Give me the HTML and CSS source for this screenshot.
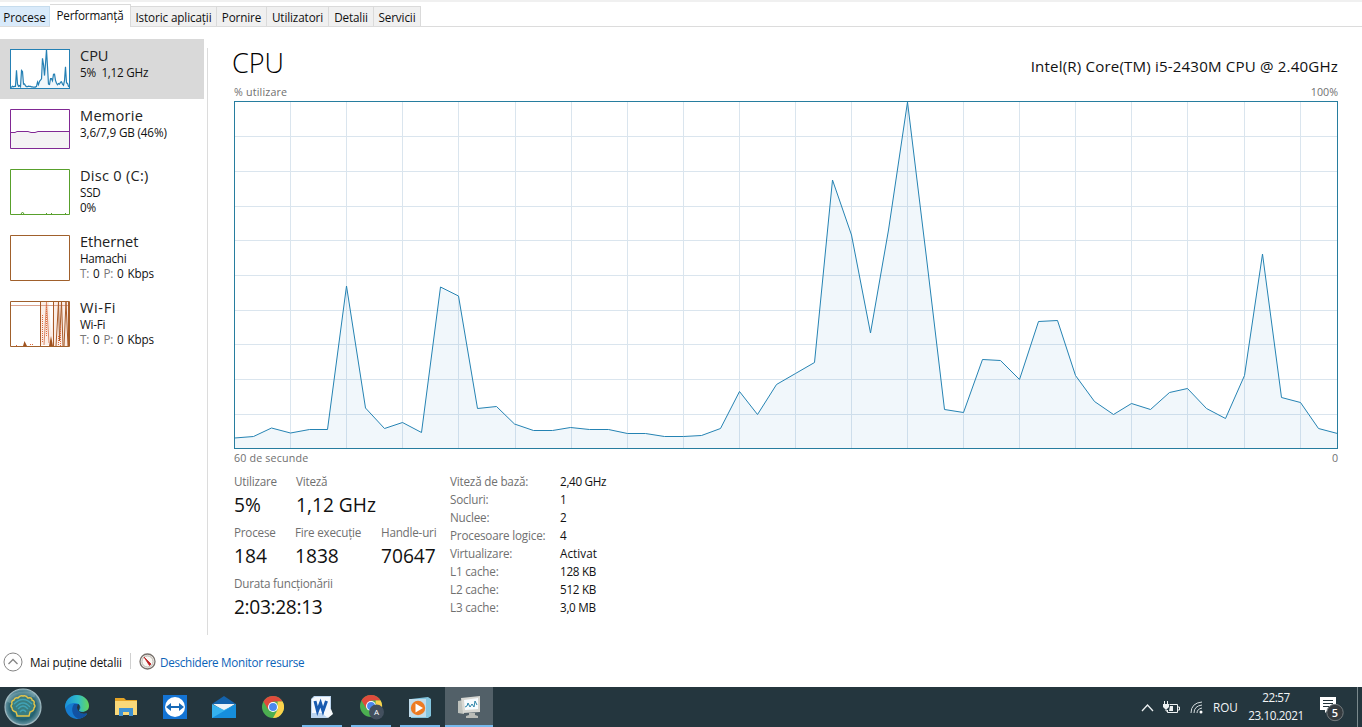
FILE: index.html
```html
<!DOCTYPE html>
<html lang="ro">
<head>
<meta charset="utf-8">
<title>Manager de activități</title>
<link rel="stylesheet" href="styles.css">
</head>
<body>
<nav class="tabs">
<span class="tab tab-first">Procese</span><span class="tab tab-active">Performanță</span><span class="tab tab-history">Istoric aplicații</span><span class="tab tab-startup">Pornire</span><span class="tab tab-users">Utilizatori</span><span class="tab tab-details">Detalii</span><span class="tab tab-services">Servicii</span>
</nav>
<main class="main">
<aside class="sidebar">
<section class="item selected">
<svg class="thumb" width="60" height="40" viewBox="0 0 60 40"><rect x=".5" y=".5" width="59" height="39" fill="#fff"/><svg x=".5" y=".5" width="59" height="39" viewBox="0 0 1103 347" preserveAspectRatio="none"><use href="#cpu-area"/><use href="#cpu-line" stroke="#2580b4" stroke-width="1.2"/></svg><rect x=".5" y=".5" width="59" height="39" fill="none" stroke="#2580b4"/></svg>
<div class="info"><h2>CPU</h2><p>5%&nbsp; 1,12 GHz</p></div>
</section>
<section class="item">
<svg class="thumb" width="60" height="40" viewBox="0 0 60 40"><path d="M0 23.5H5L7 22.5H18L21 23.5H25L28 22.5H60V40H0Z" fill="#f4f2f4"/><path d="M0 23.5H5L7 22.5H18L21 23.5H25L28 22.5H60M.5.5H59.5V39.5H.5Z" fill="none" stroke="#812894"/></svg>
<div class="info"><h2 class="t-memory">Memorie</h2><p class="p-memory">3,6/7,9 GB (46%)</p></div>
</section>
<section class="item tall">
<svg class="thumb" width="60" height="46" viewBox="0 0 60 46"><path d="M.5.5H59.5V45.5H.5ZM11 45L12.5 43L14 45M36.500 44V45M41.500 44V45M55.500 44V45" fill="#fff" stroke="#58a02c"/></svg>
<div class="info"><h2 class="t-disk">Disc 0 (C:)</h2><p>SSD</p><p>0%</p></div>
</section>
<section class="item tall">
<svg class="thumb" width="60" height="46" viewBox="0 0 60 46"><path d="M.5.5H59.5V45.5H.5Z" fill="#fff" stroke="#a0602c"/></svg>
<div class="info"><h2>Ethernet</h2><p>Hamachi</p><p class="rates"><span class="dim">T:</span> 0 <span class="dim">P:</span> 0 Kbps</p></div>
</section>
<section class="item tall">
<svg class="thumb" width="60" height="46" viewBox="0 0 60 46"><path d="M.5.5H59.5V45.5H.5Z" fill="#fff" stroke="#a0602c"/><path d="M30 1H39L42 44H31ZM44 1H59V45H40Z" fill="#fbeee7"/><path d="M1 4.500H59" stroke="#d9a38e"/><path d="M13 45L14.500 40L17 45ZM39 45L41 35L43 45Z" fill="#a0521e"/><path d="M30.500 1V45M43.500 1V45M46 45L48.500 1L49.500 40L51.500 1L53 45M54 45L56 1L58 45M58.500 1V45" fill="none" stroke="#a85a28"/><path d="M34 44L36.500 1L39 42" fill="none" stroke="#dc8c6a"/><path d="M32.500 14V42M36.500 4V35M48.500 35V45M50.500 24V45M20 43.500H23M6 44.500H7" fill="none" stroke="#e0693c" stroke-dasharray="1 1"/></svg>
<div class="info"><h2 class="t-wifi">Wi-Fi</h2><p>Wi-Fi</p><p class="rates"><span class="dim">T:</span> 0 <span class="dim">P:</span> 0 Kbps</p></div>
</section>
</aside>
<div class="rule"></div>
<article class="content">
<header class="heading"><h1>CPU</h1><span class="model">Intel(R) Core(TM) i5-2430M CPU @ 2.40GHz</span></header>
<div class="axis top"><span class="a-use">% utilizare</span><span>100%</span></div>
<svg class="chart" width="1104" height="348" viewBox="0 0 1104 348">
<defs>
<path id="cpu-line" vector-effect="non-scaling-stroke" fill="none" d="M0 337L19 335.500L37 327L56 332L75 328.500L93 328.500L112 185L131 307L150 327.500L168 321.500L187 331.500L206 186L224 195L243 307.500L262 305.500L280 323L299 329.500L318 329.500L336 326.500L355 328.500L374 328.500L393 332.500L411 332.500L430 335.500L449 335.500L467 334.500L486 327.500L505 290.500L523 313.500L542 283.500L561 272.500L580 261.500L598 79L617 134L636 232L654 129L673 1L692 157L710 308.500L729 311.500L748 258.500L766 259.500L785 278.500L804 220.500L823 219.500L841 274.500L860 300.500L879 313.500L897 302.500L916 308.500L935 291.500L953 287.500L972 307.500L991 317.500L1010 274.500L1028 153L1047 296.500L1066 301.500L1084 327.500L1103 332.500"/>
<path id="cpu-area" fill="#117dbb" fill-opacity=".06" d="M0 347V337L19 335.500L37 327L56 332L75 328.500L93 328.500L112 185L131 307L150 327.500L168 321.500L187 331.500L206 186L224 195L243 307.500L262 305.500L280 323L299 329.500L318 329.500L336 326.500L355 328.500L374 328.500L393 332.500L411 332.500L430 335.500L449 335.500L467 334.500L486 327.500L505 290.500L523 313.500L542 283.500L561 272.500L580 261.500L598 79L617 134L636 232L654 129L673 1L692 157L710 308.500L729 311.500L748 258.500L766 259.500L785 278.500L804 220.500L823 219.500L841 274.500L860 300.500L879 313.500L897 302.500L916 308.500L935 291.500L953 287.500L972 307.500L991 317.500L1010 274.500L1028 153L1047 296.500L1066 301.500L1084 327.500L1103 332.500V347Z"/>
</defs>
<path stroke="#dae5ee" d="M56.500 0V348M112.500 0V348M168.500 0V348M224.500 0V348M281.500 0V348M337.500 0V348M393.500 0V348M449.500 0V348M505.500 0V348M561.500 0V348M617.500 0V348M673.500 0V348M729.500 0V348M785.500 0V348M841.500 0V348M897.500 0V348M953.500 0V348M1010.500 0V348M1066.500 0V348M0 35.500H1104M0 70.500H1104M0 105.500H1104M0 139.500H1104M0 174.500H1104M0 209.500H1104M0 243.500H1104M0 278.500H1104M0 313.500H1104"/>
<g transform="translate(.5 0)"><use href="#cpu-area"/><use href="#cpu-line" stroke="#2583b3" stroke-width="1"/></g>
<rect x=".5" y=".5" width="1103" height="347" fill="none" stroke="#277d9f"/>
</svg>
<div class="axis bottom"><span class="a-time">60 de secunde</span><span>0</span></div>
<div class="stats">
<div class="figures">
<div class="row"><div class="stat"><label>Utilizare</label><b>5%</b></div><div class="stat speed"><label>Viteză</label><b>1,12 GHz</b></div></div>
<div class="row"><div class="stat"><label>Procese</label><b>184</b></div><div class="stat"><label>Fire execuție</label><b>1838</b></div><div class="stat"><label>Handle-uri</label><b>70647</b></div></div>
<div class="row"><div class="stat uptime"><label>Durata funcționării</label><b>2:03:28:13</b></div></div>
</div>
<dl class="specs"><dt>Viteză de bază:</dt><dd>2,40 GHz</dd><dt>Socluri:</dt><dd>1</dd><dt>Nuclee:</dt><dd>2</dd><dt>Procesoare logice:</dt><dd>4</dd><dt>Virtualizare:</dt><dd class="state">Activat</dd><dt>L1 cache:</dt><dd>128 KB</dd><dt>L2 cache:</dt><dd>512 KB</dd><dt>L3 cache:</dt><dd>3,0 MB</dd></dl>
</div>
</article>
</main>
<footer class="footer">
<svg width="20" height="20" viewBox="0 0 20 20"><circle cx="10" cy="10" r="9" fill="#fff" stroke="#858585"/><path d="M5.500 12L10 7.500L14.500 12" fill="none" stroke="#858585" stroke-width="1.300"/></svg>
<span class="less">Mai puține detalii</span><i class="divider"></i>
<svg class="gauge" width="17" height="17" viewBox="0 0 17 17"><circle cx="8.500" cy="8.500" r="7.500" fill="#faf8f4" stroke="#77716c" stroke-width="1.300"/><circle cx="8.500" cy="8.500" r="5.600" fill="none" stroke="#b5afa8"/><path d="M5 4L12 11L10.500 12.500Z" fill="#bd1c20" stroke="#bd1c20" stroke-width=".8"/></svg>
<a class="resmon">Deschidere Monitor resurse</a>
</footer>
<div class="taskbar">
<div class="slot start"><svg width="40" height="40" viewBox="0 0 40 40"><defs><radialGradient id="orb"><stop stop-color="#2f8da5"/><stop offset=".7" stop-color="#23606f"/><stop offset="1" stop-color="#6b98a5"/></radialGradient></defs><circle cx="20" cy="20" r="18" fill="url(#orb)" stroke="#9fb9c0" stroke-width="1.200"/><path d="M5 15Q12 4 32 8" fill="none" stroke="#b4d0d5" stroke-opacity=".3" stroke-width="5"/><path d="M14 28L13 25Q9 24 9 21Q7 19 9 17Q8 14 11 13Q12 10 15 11Q17 8 20 9Q23 8 25 11Q29 10 29 13Q32 14 31 17Q33 19 31 21Q31 24 27 25L26 29H14Z" fill="#397d80" stroke="#e5c54a" stroke-width="1.400"/><path d="M11 17Q20 8 29 17M13 20Q20 12 27 20M15 22Q20 16 25 22M17 25Q20 21 23 25" fill="none" stroke="#42abc3" stroke-width="1.300" stroke-opacity=".8"/></svg></div>
<div class="slot"><svg width="24" height="24" viewBox="0 0 24 24"><defs><linearGradient id="ea"><stop stop-color="#198fd9"/><stop offset=".55" stop-color="#31bdc8"/><stop offset="1" stop-color="#65d757"/></linearGradient></defs><path d="M12 0A12 12 0 1 0 22 19L15 12Z" fill="#167cd0"/><path d="M0 11C1 4 6 0 12 0C20 0 24 6 24 11C24 16 19 18 14 16C17 13 15 8 10 8C5 8 2 10 0 14Z" fill="url(#ea)"/><path d="M9 9C5 15 8 22 14 24C18 23 21 21 22 18C18 20 12 18 12 12L14 9Z" fill="#1252a2"/><path d="M13 9C17 12 13 15 14 16C16 18 20 17 23 15L22 18C17 20 12 17 12 12Z" fill="#24363e"/></svg></div>
<div class="slot"><svg width="22" height="20" viewBox="0 0 22 20"><path d="M0 1H9L11 3H22V18H0Z" fill="#e5a426"/><path d="M0 4H22V18H0Z" fill="#f9d879"/><path d="M4 19V11H18V19H14V15H8V19Z" fill="#3e92d3"/></svg></div>
<div class="slot"><svg width="24" height="24" viewBox="0 0 24 24"><path fill="#1474d4" d="M0 0H24V24H0Z"/><circle cx="12" cy="12" r="10" fill="#fff"/><path d="M3 12L8 8V11H16V8L21 12L16 16V13H8V16Z" fill="#1769b7"/></svg></div>
<div class="slot"><svg width="24" height="22" viewBox="0 0 24 22"><path d="M0 8L12 0L24 8Z" fill="#1463ac"/><path d="M1 8H23L12 15Z" fill="#eef4f7"/><path d="M0 8L12 14L24 8V22H0Z" fill="#35b2ef"/><path d="M0 22L24 8V22Z" fill="#168edc"/></svg></div>
<div class="slot"><svg width="22" height="22" viewBox="0 0 24 24"><g id="chrome"><circle cx="12" cy="12" r="12" fill="#4caf50"/><path d="M1.600 6A12 12 0 0 1 22.400 6H12L7 15Z" fill="#df4b3c"/><path d="M22.400 6A12 12 0 0 1 12 24L17 15V6Z" fill="#fcd24b"/><circle cx="12" cy="12" r="5.500" fill="#fff"/><circle cx="12" cy="12" r="4.300" fill="#4b88ed"/></g></svg></div>
<div class="slot open"><svg width="22" height="22" viewBox="0 0 22 22"><path d="M3 0H20V19L16 22H0V3Z" fill="#bcd5ef"/><path d="M1 3L4 1H19V17H1Z" fill="#f4f8fd"/><path d="M4 5L6.500 15L9.500 7L12 15L15.500 5" fill="none" stroke="#185aaf" stroke-width="3"/><path d="M13 16L20 13L22 18L17 22L13 19Z" fill="#f6f9fb"/></svg></div>
<div class="slot open"><svg width="27" height="26" viewBox="0 0 27 26"><use href="#chrome" transform="translate(2 1) scale(.92)"/><circle cx="18.500" cy="18" r="7.500" fill="#43505e"/><text x="18.500" y="21" fill="#fff" class="avatar">A</text></svg></div>
<div class="slot open"><svg width="22" height="21" viewBox="0 0 22 21"><path d="M2 2L19 0L22 2V19L19 21H2Z" fill="#83c5df"/><path d="M0 2H17V20H0Z" fill="#c0dceb"/><circle cx="9" cy="11" r="7.200" fill="#ed7b22"/><path d="M6.500 6.500L14 11L6.500 15.500Z" fill="#fff"/></svg></div>
<div class="slot open active"><svg width="24" height="22" viewBox="0 0 24 22"><path d="M1 5L7 4V18L1 17Z" fill="#bfc2bd"/><path d="M4 2L23 0V16L6 17Z" fill="#d8d8d3"/><path d="M7 4L21 2V13L8 14Z" fill="#f7fcff"/><path d="M8 11L10 10L11 7L13 11L15 8L17 11L18 5L20 9" fill="none" stroke="#2b84a9"/><path d="M12 17H18V19L21 20V22H9V20L12 19Z" fill="#babcb7"/></svg></div>
<div class="tray">
<svg width="13" height="9" viewBox="0 0 13 9"><path d="M1 8L6.500 2L12 8" fill="none" stroke="#edf1f2" stroke-width="1.300"/></svg>
<svg class="battery" width="17" height="13" viewBox="0 0 17 13"><path d="M6.500 3.500H14.500V11.500H4.500V9M15 6H16.500V9H15M1.500 0V3M4.500 0V3M3 7V10H5" fill="none" stroke="#edf1f2"/><path d="M0 3H6V6L4 8H2L0 6ZM7 5H10V10H6Z" fill="#edf1f2"/></svg>
<svg class="wifi" width="13" height="13" viewBox="0 0 13 13"><path d="M1 12Q1 2 12 1M4 12Q4 5 12 4M7 12Q7 8 12 7" fill="none" stroke="#d6dddf"/><circle cx="11" cy="11" r="1.500" fill="#fff"/></svg>
<span class="language">ROU</span><div class="clock"><span>22:57</span><span class="date">23.10.2021</span></div>
<svg class="notice" width="26" height="26" viewBox="0 0 26 26"><path d="M0 1H16V14H8L5 17V14H0Z" fill="#fff"/><path d="M3 4.500H13M3 7.500H13M3 10.500H9" stroke="#23343a"/><circle cx="15" cy="16.500" r="8.200" fill="#353b3f" stroke="#747b7e"/><text x="15" y="20.500" fill="#fff" class="count">5</text></svg>
<i class="desktop-edge"></i>
</div>
</div>
</body>
</html>
```
FILE: styles.css
```css
*{box-sizing:border-box}
body{margin:0;width:1362px;height:727px;display:flex;flex-direction:column;background:#fff;color:#111;font:11.7px/15px "Open Sans","Noto Sans",sans-serif;overflow:hidden;white-space:nowrap}
h1,h2,p,dl,dd,dt{margin:0;font-weight:400}
svg{display:block;flex:none}
.tabs{height:27px;display:flex;align-items:flex-end;border-top:2px solid #f0f0f0;border-bottom:1px solid #dcdcdc;flex:none}
.tab{height:20px;line-height:20px;border:1px solid #dadada;border-left:0;border-bottom:0;background:#f0f0f0;text-align:center;letter-spacing:-.12px;flex:none}
.tab-first{width:50px;background:#d9eafa;border-color:#c6dced}
.tab-active{width:81px;height:23px;line-height:20px;background:#fff;margin-bottom:-1px;letter-spacing:-.2px}
.tab-history{width:86px}.tab-startup{width:50px}.tab-users{width:62px}.tab-details{width:45px}.tab-services{width:47px}
.main{height:622px;display:flex;flex:none;padding-top:12px}
.sidebar{width:204px;flex:none}
.item{height:60px;padding:8px 0 0 10px;display:flex;gap:10px}
.item.tall{height:66px}
.selected{background:#d9d9d9}
.thumb{margin-top:2px}
.item h2{font-size:14.6px;line-height:16px;padding-bottom:2px;color:#222;letter-spacing:-.05px}
.item h2.t-memory,.item h2.t-disk{letter-spacing:.25px}
.item h2.t-wifi{letter-spacing:.6px}
.item p{letter-spacing:-.25px}
.item .p-memory{letter-spacing:-.15px}
.item .rates{letter-spacing:-.2px;word-spacing:1.1px}
.dim{color:#777}
.rule{width:1px;background:#dcdcdc;margin:9px 26px 14px 3px;flex:none}
.content{width:1104px;flex:none}
.heading{height:45px;padding-top:3px;display:flex;justify-content:space-between}
.heading h1{font-size:27px;line-height:42px;margin-left:-2px;font-weight:350;color:#000}
.model{font-size:15.1px;line-height:49px;letter-spacing:.17px}
.axis{display:flex;justify-content:space-between;font-size:10.7px;color:#707070}
.axis.top{height:17px;padding-top:1px}.axis.bottom{height:24px;padding-top:2px}
.a-use,.a-time{letter-spacing:.17px}
.stats{display:flex;height:153px}
.figures{width:216px;flex:none}
.row{height:51px;display:flex}
.stat{display:flex;flex-direction:column;width:61px;flex:none}
.stat+.stat{width:86px}
.speed{margin-left:1px}
.stat label{line-height:16px;padding-bottom:2px;color:#707070;letter-spacing:-.22px}
.stat b{font-size:19.2px;line-height:27px;font-weight:400;color:#111}
.stat+.stat:not(.speed) b{letter-spacing:-.02px}
.uptime b{letter-spacing:-.35px}
.specs{display:grid;grid-template-columns:110px 80px;grid-auto-rows:18px;line-height:16px}
.specs dt{color:#707070;letter-spacing:-.2px}.specs dd{letter-spacing:-.3px}
.specs .state{letter-spacing:.05px}
.footer{height:38px;display:flex;align-items:flex-start;padding:3px 0 0 3px;line-height:20px}
.less{margin-left:7px;width:92px;letter-spacing:-.14px;flex:none}
.less+.divider{flex:none}
.divider{width:1px;height:16px;background:#d0d0d0;margin:1px 8px 0}
.gauge{margin-top:1px}
.resmon{margin-left:4px;color:#0b63b8;letter-spacing:-.3px}
.taskbar{height:40px;background:#24363e;display:flex;color:#f2f5f6;flex:none}
.slot{width:48px;height:40px;margin-right:1px;display:flex;align-items:center;justify-content:center;flex:none}
.start{width:53px;margin:0;justify-content:flex-start;padding-left:3px}
.open{position:relative}
.open::after{content:"";position:absolute;bottom:0;left:4px;right:4px;height:2px;background:#76b9ed}
.active{background:#526068}.active.open::after{left:0;right:0}
.avatar{font-size:8px;text-anchor:middle}
.tray{display:flex;align-items:center;margin-left:auto}
.battery{margin-left:9px}.wifi{margin-left:10px}
.language{margin-left:10px;width:26px}
.clock{display:flex;flex-direction:column;align-items:center;width:56px;margin-left:9px;line-height:18px;letter-spacing:-.42px;padding-bottom:2px}
.notice{margin-left:16px;margin-top:4px}
.count{font-size:11px;text-anchor:middle;font-weight:600}
.desktop-edge{width:1px;height:40px;background:#7b898d;margin:0 4px 0 11px}
```
